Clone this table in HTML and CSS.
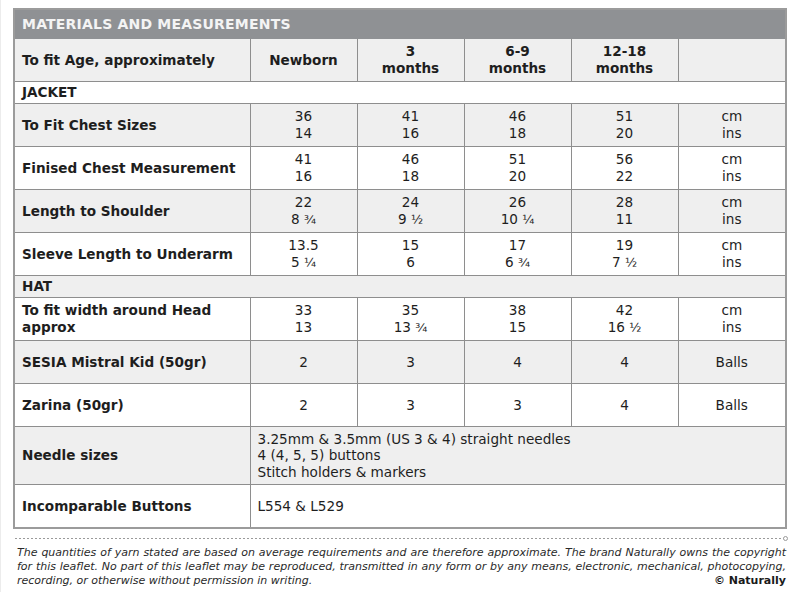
FILE: index.html
```html
<!DOCTYPE html>
<html>
<head>
<meta charset="utf-8">
<link rel="stylesheet" href="styles.css">
</head>
<body>
<div class="page">
  <table class="mm">
    <colgroup>
      <col class="c-label">
      <col class="c-size">
      <col class="c-size">
      <col class="c-size">
      <col class="c-size">
      <col class="c-unit">
    </colgroup>
    <tr class="title"><td colspan="6">MATERIALS AND MEASUREMENTS</td></tr>
    <tr class="head shade">
      <td class="label">To fit Age, approximately</td>
      <td class="hv">Newborn</td>
      <td class="hv">3<br>months</td>
      <td class="hv">6-9<br>months</td>
      <td class="hv">12-18<br>months</td>
      <td></td>
    </tr>
    <tr class="section"><td colspan="6">JACKET</td></tr>
    <tr class="data shade">
      <td class="label">To Fit Chest Sizes</td>
      <td>36<br>14</td><td>41<br>16</td><td>46<br>18</td><td>51<br>20</td><td>cm<br>ins</td>
    </tr>
    <tr class="data">
      <td class="label">Finised Chest Measurement</td>
      <td>41<br>16</td><td>46<br>18</td><td>51<br>20</td><td>56<br>22</td><td>cm<br>ins</td>
    </tr>
    <tr class="data shade">
      <td class="label">Length to Shoulder</td>
      <td>22<br>8 <span class="fr">¾</span></td><td>24<br>9 <span class="fr">½</span></td><td>26<br>10 <span class="fr">¼</span></td><td>28<br>11</td><td>cm<br>ins</td>
    </tr>
    <tr class="data">
      <td class="label">Sleeve Length to Underarm</td>
      <td>13.5<br>5 <span class="fr">¼</span></td><td>15<br>6</td><td>17<br>6 <span class="fr">¾</span></td><td>19<br>7 <span class="fr">½</span></td><td>cm<br>ins</td>
    </tr>
    <tr class="section shade"><td colspan="6">HAT</td></tr>
    <tr class="data">
      <td class="label">To fit width around Head approx</td>
      <td>33<br>13</td><td>35<br>13 <span class="fr">¾</span></td><td>38<br>15</td><td>42<br>16 <span class="fr">½</span></td><td>cm<br>ins</td>
    </tr>
    <tr class="data shade">
      <td class="label">SESIA Mistral Kid (50gr)</td>
      <td>2</td><td>3</td><td>4</td><td>4</td><td>Balls</td>
    </tr>
    <tr class="data">
      <td class="label">Zarina (50gr)</td>
      <td>2</td><td>3</td><td>3</td><td>4</td><td>Balls</td>
    </tr>
    <tr class="needle shade">
      <td class="label">Needle sizes</td>
      <td colspan="5" class="wide">3.25mm &amp; 3.5mm (US 3 &amp; 4) straight needles<br>4 (4, 5, 5) buttons<br>Stitch holders &amp; markers</td>
    </tr>
    <tr class="data">
      <td class="label">Incomparable Buttons</td>
      <td colspan="5" class="wide">L554 &amp; L529</td>
    </tr>
  </table>

  <div class="rule"><span class="dot"></span></div>

  <div class="note">
    <div class="line just">The quantities of yarn stated are based on average requirements and are therefore approximate. The brand Naturally owns the copyright</div>
    <div class="line just">for this leaflet. No part of this leaflet may be reproduced, transmitted in any form or by any means, electronic, mechanical, photocopying,</div>
    <div class="line last"><span>recording, or otherwise without permission in writing.</span><b class="brand">© Naturally</b></div>
  </div>
</div>
</body>
</html>
```

FILE: styles.css
```css
html, body {
  margin: 0;
  padding: 0;
  background: #ffffff;
}

.page {
  width: 800px;
  height: 592px;
  box-sizing: border-box;
  padding: 8px 14px 0 12px;
  font-family: "DejaVu Sans", Verdana, sans-serif;
  color: #1e1e1e;
  border-left: 1px solid #ececec;
}

.mm {
  width: 773px;
  border-collapse: collapse;
  table-layout: fixed;
  border: 2px solid #9b9b9b;
  font-size: 13.6px;
}

.c-label { width: 236px; }
.c-size { width: 107px; }
.c-unit { width: 108px; }

.mm td {
  border: 1px solid #8e8e8e;
  padding: 0;
  text-align: center;
  vertical-align: middle;
  line-height: 17px;
}

.mm tr.shade td { background: #efefef; }

.mm tr.title td {
  background: #8f9194;
  color: #f4f4f4;
  font-weight: bold;
  text-align: left;
  padding-left: 7px;
  height: 28px;
  font-size: 14px;
  letter-spacing: 0.2px;
  border-color: #8f9194;
}

.mm td.label {
  text-align: left;
  padding-left: 7px;
  font-weight: bold;
}

.mm tr.head td { height: 42px; }
.mm tr.head td.hv { font-weight: bold; }

.mm tr.section td {
  height: 21px;
  text-align: left;
  padding-left: 7px;
  font-weight: bold;
}

.mm tr.data td { height: 42px; }
.mm tr.needle td { height: 57px; }

.mm td.wide {
  text-align: left;
  padding-left: 7px;
  line-height: 16.5px;
}

.fr { font-size: 12.5px; }

.rule {
  position: relative;
  margin: 9px 0 0 2px;
  height: 1px;
  background: repeating-linear-gradient(90deg, #9a9a9a 0 2px, transparent 2px 4px);
}

.dot {
  position: absolute;
  right: -2px;
  top: -2px;
  width: 3px;
  height: 3px;
  border: 1px solid #9a9a9a;
  border-radius: 50%;
  background: #fff;
}

.note {
  margin-top: 7px;
  padding-left: 4px;
  font-size: 11px;
  font-style: italic;
  color: #2a2a2a;
  line-height: 14.2px;
}

.line.just {
  text-align: justify;
  text-align-last: justify;
}

.line.last {
  display: flex;
  justify-content: space-between;
}

.brand {
  font-style: normal;
  font-weight: bold;
  color: #1a1a1a;
}
```
